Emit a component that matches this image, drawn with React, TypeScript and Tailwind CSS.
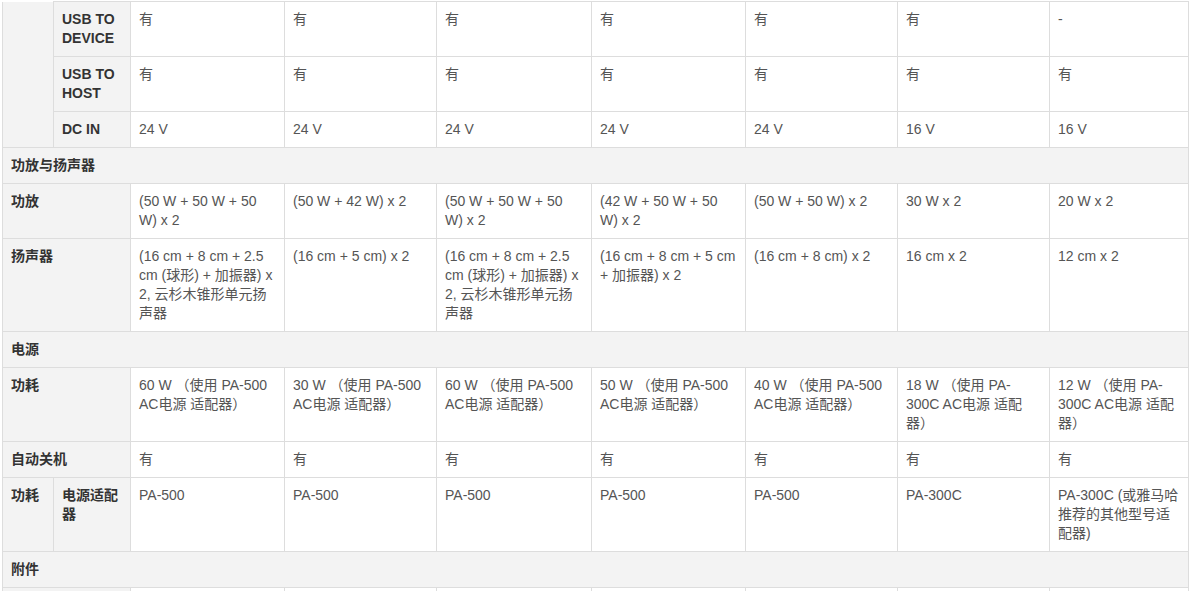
const FONT = "font-['Liberation_Sans','Noto_Sans_CJK_SC',Arial,sans-serif]";

const th = "border border-[#ddd] bg-[#f3f3f3] px-2 py-2 text-left align-top font-bold text-[#333]";
const td = "border border-[#ddd] bg-white px-2 py-2 text-left align-top font-normal text-[#555]";

const COLS = [51, 77, 154, 152, 155, 154, 152, 152, 139];

type Row = { label: string; cells: React.ReactNode[] };

const power = (w: string, pa: string) => `${w} （使用 ${pa} AC电源 适配器）`;

function DataCells({ cells }: { cells: React.ReactNode[] }) {
  return (
    <>
      {cells.map((c, i) => (
        <td key={i} className={td}>
          {c}
        </td>
      ))}
    </>
  );
}

function Section({ title }: { title: string }) {
  return (
    <tr>
      <th colSpan={9} className={th}>
        {title}
      </th>
    </tr>
  );
}

function PlainRow({ label, cells }: Row) {
  return (
    <tr>
      <th colSpan={2} className={th}>
        {label}
      </th>
      <DataCells cells={cells} />
    </tr>
  );
}

const SPEAKER_FULL = "(16 cm + 8 cm + 2.5 cm (球形) + 加振器) x 2, 云杉木锥形单元扬声器";

export default function App() {
  return (
    <div className={`h-[591px] w-[1193px] overflow-hidden bg-white ${FONT}`}>
      <table className="ml-[2px] mt-px w-[1186px] table-fixed border-collapse text-[14px] leading-[19px]">
        <colgroup>
          {COLS.map((w, i) => (
            <col key={i} style={{ width: w }} />
          ))}
        </colgroup>
        <tbody>
          {/* group label sits above the visible area, so only its body shows */}
          <tr>
            <th rowSpan={3} className={`${th} border-t-0`} />
            <th className={th}>USB TO DEVICE</th>
            <DataCells cells={["有", "有", "有", "有", "有", "有", "-"]} />
          </tr>
          <tr>
            <th className={th}>USB TO HOST</th>
            <DataCells cells={["有", "有", "有", "有", "有", "有", "有"]} />
          </tr>
          <tr>
            <th className={th}>DC IN</th>
            <DataCells cells={["24 V", "24 V", "24 V", "24 V", "24 V", "16 V", "16 V"]} />
          </tr>

          <Section title="功放与扬声器" />
          <PlainRow
            label="功放"
            cells={[
              "(50 W + 50 W + 50 W) x 2",
              "(50 W + 42 W) x 2",
              "(50 W + 50 W + 50 W) x 2",
              "(42 W + 50 W + 50 W) x 2",
              "(50 W + 50 W) x 2",
              "30 W x 2",
              "20 W x 2",
            ]}
          />
          <PlainRow
            label="扬声器"
            cells={[
              SPEAKER_FULL,
              "(16 cm + 5 cm) x 2",
              SPEAKER_FULL,
              "(16 cm + 8 cm + 5 cm + 加振器) x 2",
              "(16 cm + 8 cm) x 2",
              "16 cm x 2",
              "12 cm x 2",
            ]}
          />

          <Section title="电源" />
          <PlainRow
            label="功耗"
            cells={[
              power("60 W", "PA-500"),
              power("30 W", "PA-500"),
              power("60 W", "PA-500"),
              power("50 W", "PA-500"),
              power("40 W", "PA-500"),
              power("18 W", "PA-300C"),
              power("12 W", "PA-300C"),
            ]}
          />
          <PlainRow label="自动关机" cells={["有", "有", "有", "有", "有", "有", "有"]} />
          <tr>
            <th className={th}>功耗</th>
            <th className={th}>电源适配器</th>
            <DataCells
              cells={[
                "PA-500",
                "PA-500",
                "PA-500",
                "PA-500",
                "PA-500",
                "PA-300C",
                "PA-300C (或雅马哈推荐的其他型号适配器)",
              ]}
            />
          </tr>

          <Section title="附件" />
          <tr>
            <th colSpan={2} className={`${th} h-9`} />
            <DataCells cells={["", "", "", "", "", "", ""]} />
          </tr>
        </tbody>
      </table>
    </div>
  );
}
